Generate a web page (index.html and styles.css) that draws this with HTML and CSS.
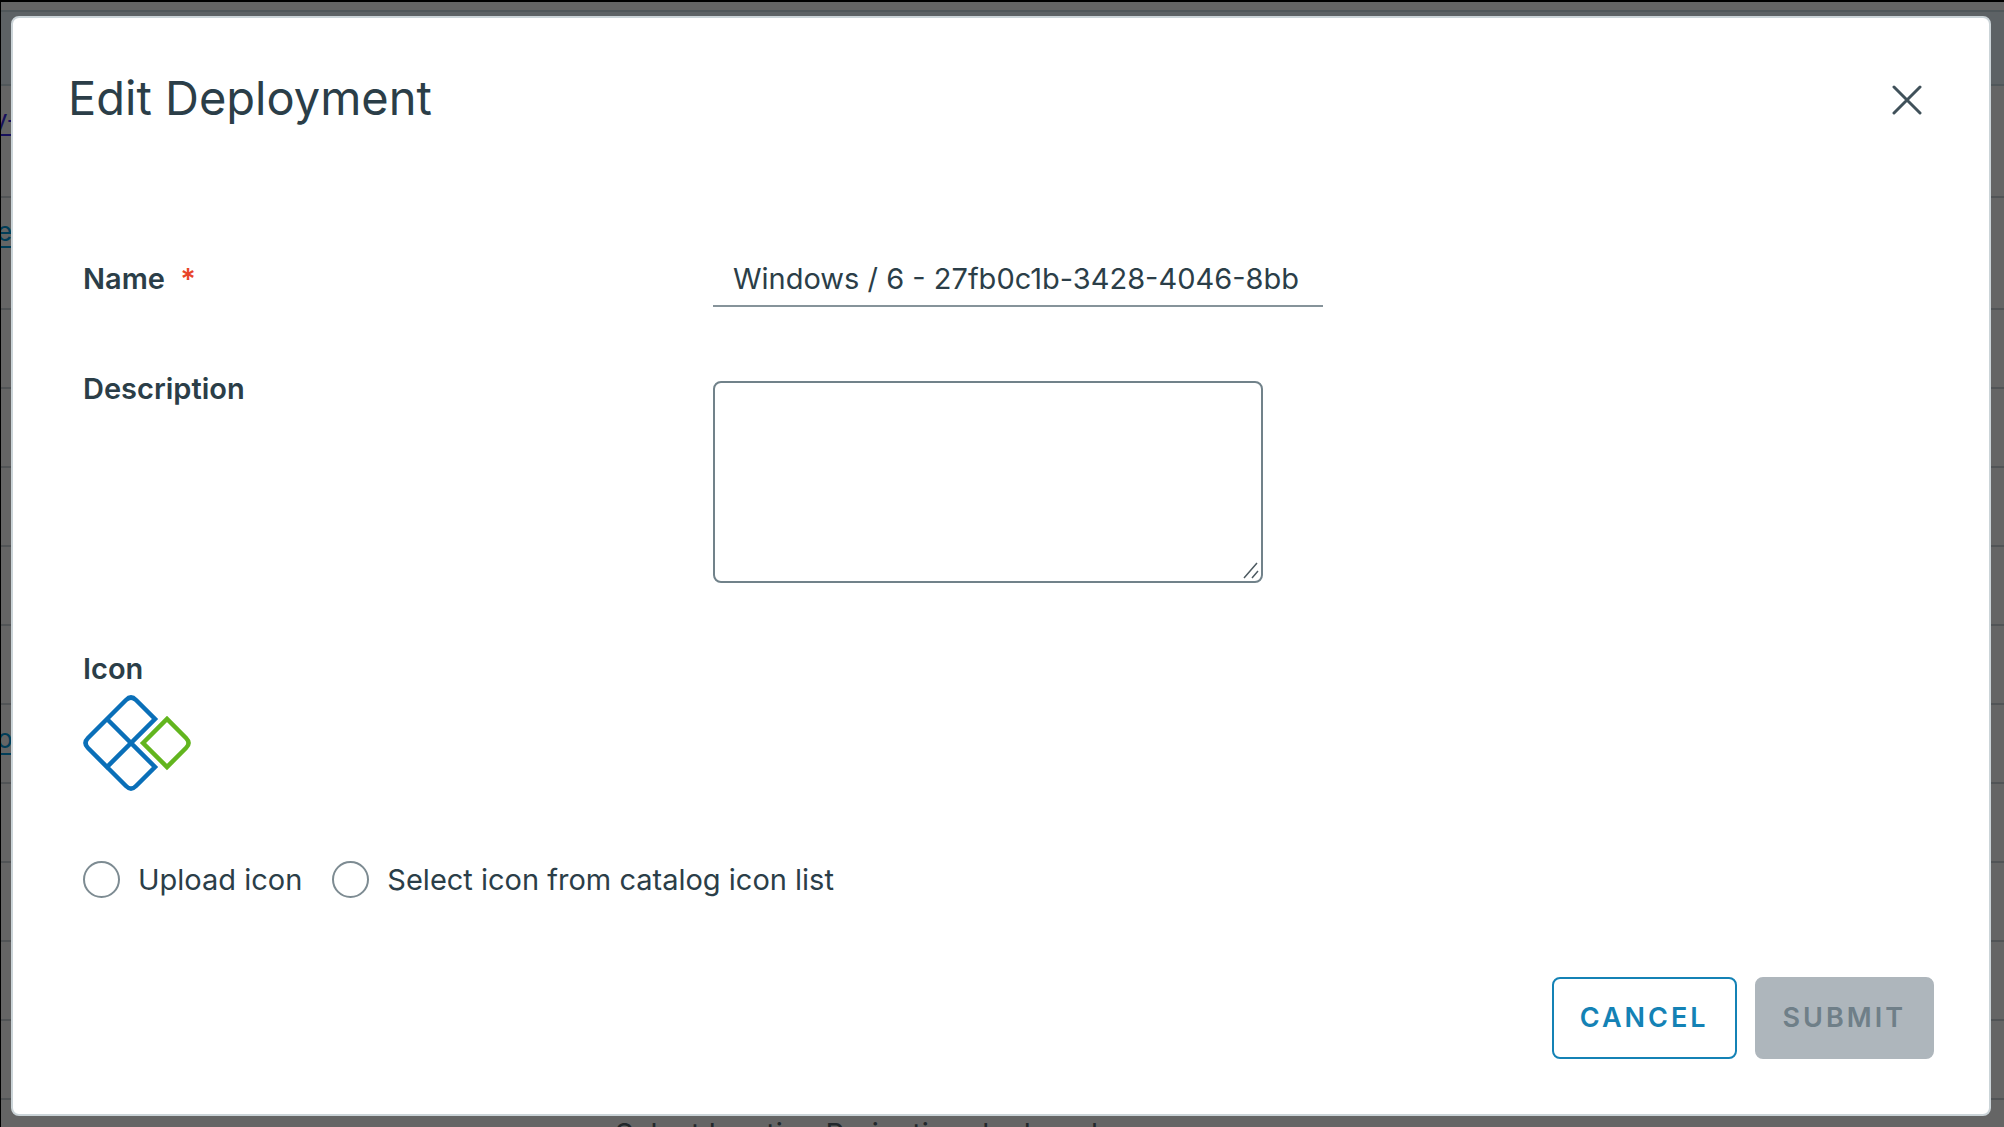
FILE: index.html
```html
<!DOCTYPE html>
<html lang="en">
<head>
<meta charset="utf-8">
<title>Edit Deployment</title>
<meta name="viewport" content="width=device-width, initial-scale=1">
<link rel="stylesheet" href="styles.css">
</head>
<body>
<div class="backdrop">
  <div class="page" aria-hidden="true">
    <div class="page-head"></div>
    <div class="row tall link-visited"><span>y-</span></div>
    <div class="row tall link"><span>er</span></div>
    <div class="row"></div>
    <div class="row"></div>
    <div class="row"></div>
    <div class="row"></div>
    <div class="row"></div>
    <div class="row link"><span>o.</span></div>
    <div class="row"></div>
    <div class="row"></div>
    <div class="row"></div>
    <div class="row"></div>
    <div class="page-foot">Select location Projection deployed resources</div>
  </div>
  <main class="modal" role="dialog" aria-labelledby="title">
    <header class="modal-head">
      <h1 class="title" id="title">Edit Deployment</h1>
      <button class="close" type="button" aria-label="Close">
        <svg viewBox="0 0 30 30" width="30" height="30"><path d="M2 2 28 28M28 2 2 28" fill="none" stroke="currentColor" stroke-width="3" stroke-linecap="round"/></svg>
      </button>
    </header>
    <form class="form">
      <div class="field">
        <label class="label" for="name">Name <span class="required">*</span></label>
        <input class="text-input" id="name" type="text" value="Windows / 6 - 27fb0c1b-3428-4046-8bb">
      </div>
      <div class="field">
        <label class="label" for="description">Description</label>
        <div class="area-wrap">
          <textarea class="text-area" id="description"></textarea>
          <svg class="grip" viewBox="0 0 16 18" width="16" height="18"><path d="M1 17 14 2M9 17 15 10" fill="none" stroke="#4d5a61" stroke-width="1.5"/></svg>
        </div>
      </div>
      <div class="icon-field">
        <span class="label">Icon</span>
        <svg class="icon" viewBox="0 0 108 96" width="108" height="96" fill="none" stroke-width="4.5">
          <path stroke="#0a6fb8" d="M24 24 43 5Q48 0 53 5L72 24 24 72 5 53Q0 48 5 43ZM24 24 72 72 53 91Q48 96 43 91L24 72"/>
          <path stroke="#62b51e" d="M60 48 84 24 103 43Q108 48 103 53L84 72Z"/>
        </svg>
      </div>
      <div class="choices">
        <label class="choice"><input class="radio" type="radio" name="source">Upload icon</label>
        <label class="choice"><input class="radio" type="radio" name="source">Select icon from catalog icon list</label>
      </div>
      <footer class="actions">
        <button class="button outline" type="button">CANCEL</button>
        <button class="button" type="submit" disabled>SUBMIT</button>
      </footer>
    </form>
  </main>
</div>
</body>
</html>
```
FILE: styles.css
```css
* { box-sizing: border-box; }
body {
  margin: 0;
  background: #656565;
  color: #2b3e48;
  font: 29px/36px Inter, "Open Sans", sans-serif;
}
.backdrop {
  position: relative;
  min-height: 100vh;
  overflow: hidden;
  padding: 14px 13px 11px 10px;
  border-top: 2px solid #000;
  border-left: 1px solid #000;
}
.page { position: absolute; inset: 0; overflow: hidden; }
.page-head {
  margin-top: 8px;
  height: 76px;
  border-top: 2px solid #50575a;
  border-bottom: 2px solid #50575a;
  background: #5d6265;
}
.row {
  display: flex;
  align-items: flex-start;
  height: 79px;
  padding-top: 20px;
  border-bottom: 2px solid #515456;
}
.row.tall { height: 112px; }
.row span { margin-left: -4px; font-size: 26px; line-height: 28px; border-bottom: 2px solid; }
.link { color: #003d58; }
.link-visited { color: #17105c; }
.row.link-visited span { margin-left: -8px; }
.page-foot { padding: 16px 0 0 614px; color: #22282b; white-space: nowrap; }
.modal {
  position: relative;
  display: flex;
  flex-direction: column;
  min-height: calc(100vh - 27px);
  padding: 54px 55px 55px;
  border: 2px solid #cbd4d8;
  border-radius: 8px;
  background: #fff;
}
.modal-head { display: flex; justify-content: space-between; align-items: center; }
.title { margin: 0; font-size: 47px; line-height: 52px; font-weight: 400; }
.close { padding: 4px 12px 0; border: 0; background: none; color: #40515a; line-height: 0; }
.form { display: flex; flex: 1; flex-direction: column; padding: 137px 0 0 15px; }
.field { display: flex; align-items: flex-start; margin-bottom: 64px; }
.label { flex: 0 0 630px; font-weight: 600; }
.required { margin-left: 8px; color: #e8442a; }
.text-input {
  width: 610px;
  padding: 0 20px 8px;
  border: 0;
  border-bottom: 2px solid #86939a;
  font: inherit;
  color: inherit;
  background: none;
}
.area-wrap { position: relative; margin-top: 10px; }
.text-area {
  display: block;
  width: 550px;
  height: 202px;
  border: 2px solid #71828a;
  border-radius: 8px;
  background: #fff;
  resize: none;
}
.grip { position: absolute; right: 4px; bottom: 4px; pointer-events: none; }
.icon-field { display: flex; flex-direction: column; align-items: flex-start; gap: 8px; margin-top: 4px; }
.icon-field .label { flex: none; }
.icon { display: block; }
.choices { display: flex; gap: 30px; margin-top: 70px; }
.choice { display: flex; align-items: center; gap: 18px; }
.radio { appearance: none; width: 37px; height: 37px; margin: 0; border: 2px solid #7d8b92; border-radius: 50%; }
.actions { display: flex; justify-content: flex-end; gap: 18px; margin-top: auto; }
.button {
  height: 82px;
  padding: 0 26px;
  border: 2px solid #aeb6bc;
  border-radius: 8px;
  background: #aeb6bc;
  color: #6f7f88;
  font: 600 27px/36px Inter, "Open Sans", sans-serif;
  letter-spacing: 3px;
}
.button.outline { border-color: #1482b5; background: #fff; color: #1482b5; }
```
